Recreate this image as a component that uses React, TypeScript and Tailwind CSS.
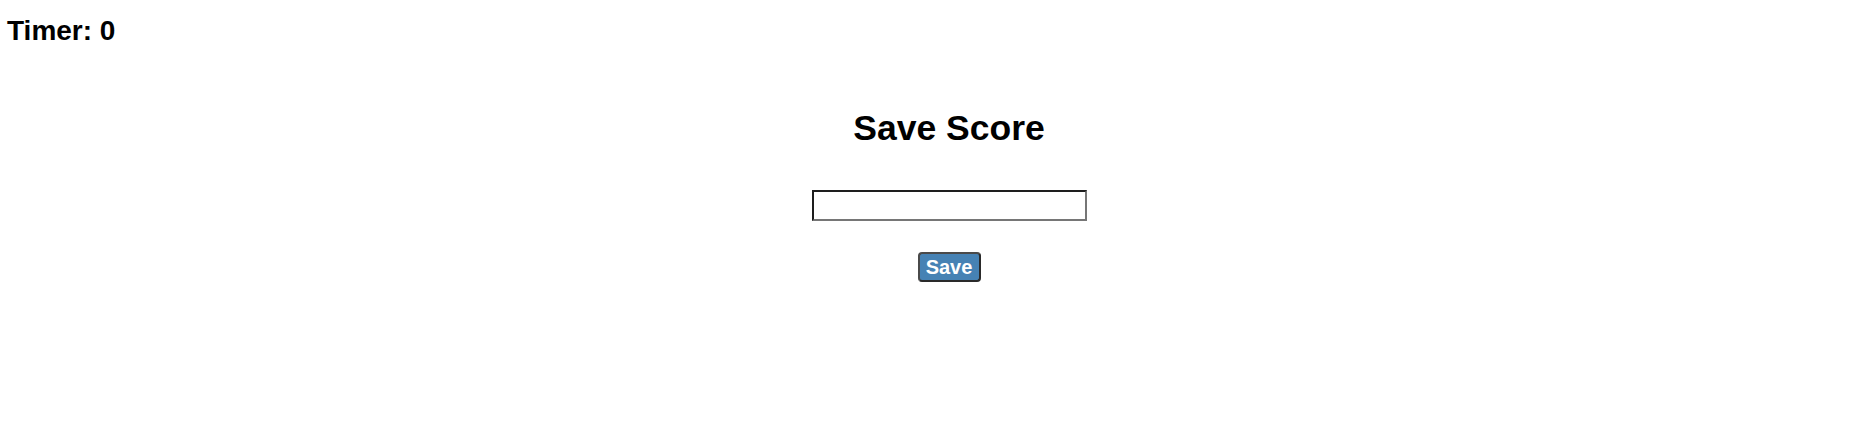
import React, { useState, FC } from "react";

const App: FC = () => {
  const [initials, setInitials] = useState("");
  const [timer] = useState(0);

  return (
    <div className="min-h-[437px] w-full bg-white text-black font-['Liberation_Sans',Arial,sans-serif]">
      <div className="pt-[15px] pl-[7px] text-[28px] leading-[32px] font-bold">
        Timer: {timer}
      </div>
      <div className="flex flex-col items-center pl-[49px] pt-[61px]">
        <h1 className="text-[35.5px] leading-[40px] font-bold">Save Score</h1>
        <input
          type="text"
          value={initials}
          onChange={(event) => setInitials(event.target.value)}
          className="mt-[42px] w-[275px] h-[31px] px-1 text-[17px] bg-white border-2 border-t-[#1e1e1e] border-l-[#1e1e1e] border-b-[#767676] border-r-[#767676] outline-none"
        />
        <button
          type="button"
          className="mt-[31px] w-[63px] h-[30px] flex items-center justify-center bg-[#4682b4] text-white text-[20px] leading-none font-bold rounded-[4px] border-2 border-t-[#4a4a4a] border-l-[#4a4a4a] border-b-[#2a2a2a] border-r-[#2a2a2a]"
        >
          Save
        </button>
      </div>
    </div>
  );
};

export default App;
